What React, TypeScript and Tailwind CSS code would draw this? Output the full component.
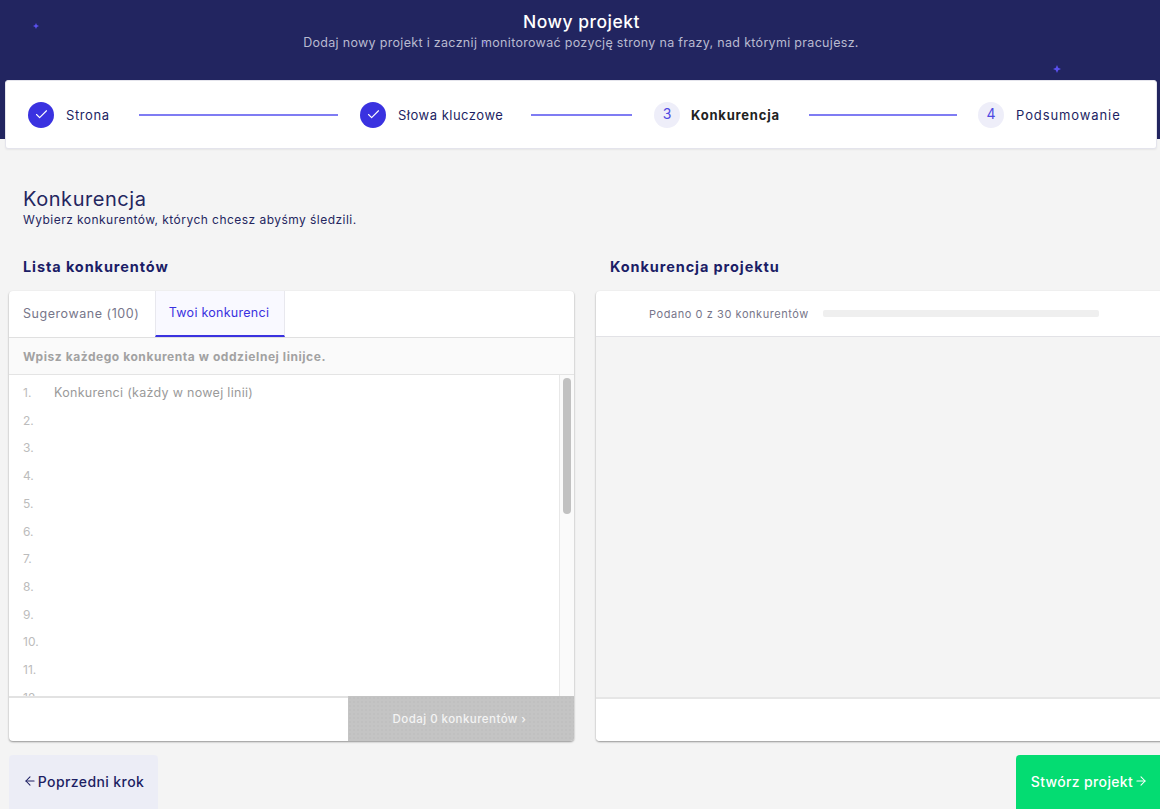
import React from "react";
import { ArrowLeft, ArrowRight, Check } from "lucide-react";

function Sparkle({ className }: { className: string }) {
  return (
    <svg viewBox="0 0 10 10" className={className} fill="#5a50ee">
      <path d="M5 0 L6.5 3.5 L10 5 L6.5 6.5 L5 10 L3.5 6.5 L0 5 L3.5 3.5 Z" />
    </svg>
  );
}

function Done() {
  return (
    <div className="w-[26px] h-[26px] rounded-full bg-[#3a32e0] flex items-center justify-center shrink-0">
      <Check size={15} color="#fff" strokeWidth={1.8} />
    </div>
  );
}

function Num({ n }: { n: number }) {
  return (
    <div className="w-[26px] h-[26px] rounded-full bg-[#eeeef9] flex items-center justify-center shrink-0 text-[14px] text-[#4f49e2] pb-[2px]">
      {n}
    </div>
  );
}

function Line({ className }: { className: string }) {
  return <div className={"h-[2px] bg-[#7f7cf3] shrink-0 " + className} />;
}

const nums = [1, 2, 3, 4, 5, 6, 7, 8, 9, 10, 11, 12];

export default function App() {
  return (
    <div className="h-screen w-full overflow-hidden bg-[#f4f4f4] font-['Inter','Liberation_Sans',sans-serif]">
      <header className="relative h-[139px] bg-[#222560] text-center pt-[12px]">
        <Sparkle className="absolute left-[33px] top-[23px] w-[6px] h-[6px]" />
        <Sparkle className="absolute left-[483px] top-[41px] w-[3px] h-[3px]" />
        <Sparkle className="absolute left-[1053px] top-[65px] w-[8px] h-[8px]" />
        <h1 className="pl-[3px] text-[17.5px] leading-[20px] font-medium text-white tracking-[0.5px]">Nowy projekt</h1>
        <p className="pl-[2px] mt-[1px] text-[12.5px] leading-[20px] text-[#b9bad0] tracking-[0.31px]">
          Dodaj nowy projekt i zacznij monitorować pozycję strony na frazy, nad którymi pracujesz.
        </p>
      </header>

      <div className="relative -mt-[59px] mx-[5px] w-[1152px] h-[69px] bg-white rounded-[3px] border border-[#e4e4ec] shadow-[0_1px_2px_rgba(0,0,0,0.06)] flex items-center pl-[22px] text-[13px] text-[#1d1f63]">
        <Done />
        <span className="ml-[12px] mt-[2px] w-[73px] shrink-0 tracking-[0.6px]">Strona</span>
        <Line className="w-[199px]" />
        <div className="ml-[22px]"><Done /></div>
        <span className="ml-[12px] mt-[2px] w-[133px] shrink-0 tracking-[0.5px]">Słowa kluczowe</span>
        <Line className="w-[101px]" />
        <div className="ml-[22px]"><Num n={3} /></div>
        <span className="ml-[11px] mt-[2px] w-[118px] shrink-0 font-bold text-[#222] tracking-[0.8px]">Konkurencja</span>
        <Line className="w-[148px]" />
        <div className="ml-[21px]"><Num n={4} /></div>
        <span className="ml-[12px] mt-[2px] shrink-0 tracking-[0.9px]">Podsumowanie</span>
      </div>

      <section className="pl-[23px] pt-[38px] text-[#24265f]">
        <h2 className="text-[20px] leading-[24px] tracking-[0.55px]">Konkurencja</h2>
        <p className="text-[12px] leading-[16px] mt-[1px] tracking-[0.46px]">Wybierz konkurentów, których chcesz abyśmy śledzili.</p>
      </section>

      <div className="flex pl-[23px] mt-[29px] text-[14.5px] leading-[20px] font-bold text-[#1b1d66] tracking-[0.9px]">
        <h3 className="w-[587px] shrink-0">Lista konkurentów</h3>
        <h3>Konkurencja projektu</h3>
      </div>

      <div className="flex pl-[9px] gap-[22px] mt-[14px] w-[1200px]">
        <div className="w-[565px] h-[450px] shrink-0 bg-white rounded-[4px] shadow-[0_1px_2px_rgba(0,0,0,0.4)] flex flex-col overflow-hidden">
          <div className="flex h-[47px] shrink-0 border-b border-[#e0e0e0] text-[12.5px]">
            <div className="w-[146px] pl-[14px] flex items-center text-[#77768a] tracking-[0.55px]">Sugerowane (100)</div>
            <div className="w-[130px] pr-[2px] flex items-center justify-center text-[#3a32e0] bg-[#f9f9ff] border-x border-[#e8e8ee] border-b-2 border-b-[#3a32e0] tracking-[0.27px]">Twoi konkurenci</div>
          </div>
          <div className="h-[37px] shrink-0 bg-[#fafafa] border-b border-[#e4e4e4] pl-[14px] pt-[2px] flex items-center text-[12px] font-bold text-[#a2a2a2] tracking-[0.56px]">
            Wpisz każdego konkurenta w oddzielnej linijce.
          </div>
          <div className="flex-1 flex min-h-0 overflow-hidden">
            <div className="w-[45px] shrink-0 pl-[14px] pt-[4px] text-[12px] leading-[27.7px] text-[#bcbcbc] overflow-hidden">
              {nums.map((n) => (
                <div key={n}>{n}.</div>
              ))}
            </div>
            <div className="flex-1 pt-[4px] text-[12.5px] leading-[27.75px] text-[#9a9a9a] tracking-[0.3px]">Konkurenci (każdy w nowej linii)</div>
            <div className="w-[15px] shrink-0 bg-[#fafafa] border-l border-[#e8e8e8] pt-[3px] flex justify-center">
              <div className="w-[8px] h-[136px] rounded-[4px] bg-[#c1c1c1]" />
            </div>
          </div>
          <div className="h-[45px] shrink-0 border-t-2 border-[#e2e2e2] flex justify-end">
            <div className="w-[226px] -mt-[2px] pt-[2px] pr-[3px] bg-[#c4c4c4] bg-[radial-gradient(#c0c0c0_1px,transparent_1px)] bg-[length:4px_4px] flex items-center justify-center text-[11.5px] font-medium text-[#f4f4f4] tracking-[0.45px]">
              Dodaj 0 konkurentów ›
            </div>
          </div>
        </div>

        <div className="w-[576px] h-[450px] shrink-0 bg-white rounded-[4px] shadow-[0_1px_2px_rgba(0,0,0,0.4)] flex flex-col overflow-hidden">
          <div className="h-[46px] shrink-0 border-b border-[#e2e2e6] flex items-center pl-[53px] text-[11px] text-[#77768a]">
            <span className="w-[174px] mt-[2px] shrink-0 tracking-[0.56px]">Podano 0 z 30 konkurentów</span>
            <div className="w-[276px] h-[7px] rounded-[2px] bg-[#efefef]" />
          </div>
          <div className="flex-1 bg-[#f4f4f4]" />
          <div className="h-[44px] shrink-0 bg-white border-t-2 border-[#e6e6e6]" />
        </div>
      </div>

      <div className="flex justify-between pl-[9px] mt-[14px] text-[14px] font-medium">
        <button className="w-[149px] h-[60px] rounded-[4px] bg-[#ecedf6] text-[#1d1f63] flex items-center justify-center gap-[1px] pb-[8px] tracking-[0.4px]">
          <ArrowLeft size={14} strokeWidth={1.8} />
          Poprzedni krok
        </button>
        <button className="w-[144px] h-[60px] pl-[3px] rounded-l-[4px] bg-[#04dc72] text-white flex items-center justify-center gap-[1px] pb-[8px] tracking-[0.35px]">
          Stwórz projekt
          <ArrowRight size={14} strokeWidth={1.8} />
        </button>
      </div>
    </div>
  );
}
